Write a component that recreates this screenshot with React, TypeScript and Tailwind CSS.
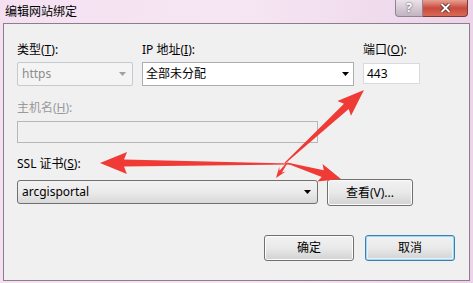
import React from 'react';

type Arrow = {
  from: [number, number];
  to: [number, number];
  w0: number;
  w1: number;
  head: number;
  half: number;
};

const arrows: Arrow[] = [
  { from: [285, 163], to: [364, 90], w0: 1, w1: 7, head: 24, half: 10 },
  { from: [290, 164], to: [100, 163], w0: 1, w1: 7, head: 24, half: 11 },
  { from: [287, 163], to: [276, 178], w0: 1, w1: 3, head: 8, half: 4 },
  { from: [287, 163], to: [341, 179], w0: 1, w1: 7, head: 19, half: 9 },
];

const arrowPoints = ({ from, to, w0, w1, head, half }: Arrow) => {
  const dx = to[0] - from[0];
  const dy = to[1] - from[1];
  const len = Math.hypot(dx, dy);
  const ux = dx / len;
  const uy = dy / len;
  const nx = -uy;
  const ny = ux;
  const bx = to[0] - ux * head;
  const by = to[1] - uy * head;
  const pts = [
    [from[0] + nx * w0 / 2, from[1] + ny * w0 / 2],
    [bx + nx * w1 / 2, by + ny * w1 / 2],
    [bx - ux * 3 + nx * half, by - uy * 3 + ny * half],
    [to[0], to[1]],
    [bx - ux * 3 - nx * half, by - uy * 3 - ny * half],
    [bx - nx * w1 / 2, by - ny * w1 / 2],
    [from[0] - nx * w0 / 2, from[1] - ny * w0 / 2],
  ];
  return pts.map((p) => `${p[0].toFixed(1)},${p[1].toFixed(1)}`).join(' ');
};

const font = { fontFamily: '"Segoe UI", "Noto Sans", "Noto Sans CJK SC", sans-serif' };

function DropArrow({ muted }: { muted?: boolean }) {
  return (
    <svg width="7" height="4" viewBox="0 0 7 4" className="shrink-0">
      <path d="M0 0h7L3.5 4z" fill={muted ? '#a0a0a0' : '#000'} />
    </svg>
  );
}

function WinButton({ label, wide, primary }: { label: string; wide: string; primary?: boolean }) {
  return (
    <div
      className={`${wide} flex items-center justify-center rounded-[3px] border bg-gradient-to-b from-[#f2f2f2] via-[#e9e9e9] to-[#d2d2d2] text-[12px] text-black ${
        primary
          ? 'border-[#3c7fb1] shadow-[inset_0_0_0_1px_#9fd8f0,inset_0_0_0_2px_#e4f4fb]'
          : 'border-[#707070] shadow-[inset_0_0_0_1px_#fcfcfc]'
      }`}
    >
      {label}
    </div>
  );
}

export default function App() {
  return (
    <div
      className="relative h-[283px] w-[473px] overflow-hidden bg-gradient-to-r from-[#f4e0f1] via-[#f6e6f3] to-[#ecd3e9]"
      style={font}
    >
      <div className="flex h-[23px] items-start justify-between">
        <span className="pl-[5px] pt-[3px] text-[12px] text-black">编辑网站绑定</span>
        <div className="mr-[5px] flex">
          <div className="flex h-[17px] w-[28px] items-center justify-center rounded-bl-[4px] border border-t-0 border-[#8f8591] bg-gradient-to-b from-[#ece2eb] via-[#d6cad5] to-[#c2b4c1] text-[12px] font-bold text-white [text-shadow:0_0_2px_#333]">
            ?
          </div>
          <div className="flex h-[17px] w-[45px] items-center justify-center rounded-br-[4px] border border-l-0 border-t-0 border-[#7e3a36] bg-gradient-to-b from-[#e6a093] via-[#c94a3d] to-[#d96a56]">
            <svg width="11" height="10" viewBox="0 0 11 10">
              <path d="M1.5 1l8 8M9.5 1l-8 8" stroke="#4a1a18" strokeWidth="3.4" />
              <path d="M1.5 1l8 8M9.5 1l-8 8" stroke="#fff" strokeWidth="2" />
            </svg>
          </div>
        </div>
      </div>

      <div className="mx-[3px] h-[258px] border border-[#8b7f8d] bg-[#f0f0f0] pl-[13px] pr-[14px] pt-[18px]">
        <div className="grid grid-cols-[116px_212px_57px] gap-x-[9px] text-[12px]">
          <span className="h-[16px] leading-[16px] text-black">
            类型(<u>T</u>):
          </span>
          <span className="h-[16px] leading-[16px] text-black">
            IP 地址(<u>I</u>):
          </span>
          <span className="h-[16px] leading-[16px] text-black">
            端口(<u>O</u>):
          </span>

          <div className="mt-[4px] flex h-[24px] items-center justify-between rounded-[2px] border border-[#c6cacc] bg-[#f4f4f4] pl-[4px] pr-[6px] text-[#8d8d8d]">
            https
            <DropArrow muted />
          </div>
          <div className="mt-[4px] flex h-[24px] items-center justify-between border border-[#abadb3] bg-white pl-[3px] pr-[4px] text-black">
            全部未分配
            <DropArrow />
          </div>
          <div className="mt-[5px] flex h-[21px] items-center border border-[#d5dbe1] bg-white pl-[3px] text-black">
            443
          </div>
        </div>

        <div className="mt-[14px] h-[16px] text-[12px] leading-[16px] text-[#9a9a9a]">
          主机名(<u>H</u>):
        </div>
        <div className="mt-[5px] h-[22px] w-[301px] border border-[#b4b8bc] bg-[#f0f0f0]" />

        <div className="mt-[13px] h-[16px] text-[12px] leading-[16px] text-black">
          SSL 证书(<u>S</u>):
        </div>
        <div className="mt-[7px] flex items-start gap-[9px]">
          <div className="mt-[1px] flex h-[24px] w-[301px] items-center justify-between rounded-[3px] border border-[#707070] bg-gradient-to-b from-[#f2f2f2] via-[#ebebeb] to-[#d8d8d8] pl-[4px] pr-[6px] text-[12px] text-black">
            arcgisportal
            <DropArrow />
          </div>
          <WinButton label="查看(V)..." wide="w-[86px] h-[27px]" />
        </div>

        <div className="mt-[29px] flex justify-end gap-[11px]">
          <WinButton label="确定" wide="w-[90px] h-[26px]" />
          <WinButton label="取消" wide="w-[90px] h-[26px]" primary />
        </div>
      </div>

      <svg className="pointer-events-none absolute inset-0" width="473" height="283">
        {arrows.map((a, i) => (
          <polygon key={i} points={arrowPoints(a)} fill="#f03a35" />
        ))}
      </svg>
    </div>
  );
}
